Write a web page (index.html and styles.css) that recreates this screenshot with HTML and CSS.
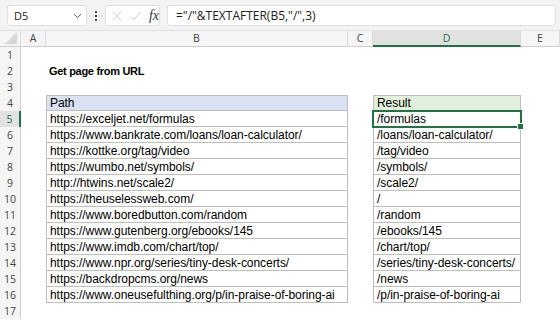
FILE: index.html
```html
<!DOCTYPE html>
<html>
<head>
<meta charset="utf-8">
<link rel="stylesheet" href="styles.css">
</head>
<body>
<div class="app">
  <div class="fbar">
    <div class="namebox"><span class="ref">D5</span>
      <svg class="chev" width="9" height="6" viewBox="0 0 9 6"><path d="M1 1.2 L4.5 4.6 L8 1.2" fill="none" stroke="#555" stroke-width="1"/></svg>
    </div>
    <div class="dots"><i></i><i></i><i></i></div>
    <div class="fxbox">
      <svg width="12" height="12" viewBox="0 0 12 12"><path d="M1 1 L11 11 M11 1 L1 11" stroke="#c4c4c4" stroke-width="1" fill="none"/></svg>
      <svg width="13" height="12" viewBox="0 0 13 12"><path d="M1 6.5 L4.5 10 L12 1.5" stroke="#c4c4c4" stroke-width="1" fill="none"/></svg>
      <span class="fx">fx</span>
    </div>
    <div class="formula">="/"&amp;TEXTAFTER(B5,"/",3)</div>
  </div>
  <div class="sheet">
    <div class="corner"><svg width="12" height="12" viewBox="0 0 12 12"><path d="M12 0 L12 12 L0 12 Z" fill="#d6d6d6"/></svg></div>
    <div class="ch">A</div><div class="ch">B</div><div class="ch">C</div><div class="ch sel">D</div><div class="ch">E</div>

    <div class="rh">1</div><div class="c"></div><div class="c"></div><div class="c"></div><div class="c"></div><div class="c"></div>
    <div class="rh">2</div><div class="c"></div><div class="c title">Get page from URL</div><div class="c"></div><div class="c"></div><div class="c"></div>
    <div class="rh">3</div><div class="c"></div><div class="c"></div><div class="c"></div><div class="c"></div><div class="c"></div>
    <div class="rh">4</div><div class="c"></div><div class="c t hb top">Path</div><div class="c"></div><div class="c t hg top">Result</div><div class="c"></div>
    <div class="rh rsel">5</div><div class="c"></div><div class="c t">https://exceljet.net/formulas</div><div class="c"></div><div class="c t active">/formulas<span class="handle"></span></div><div class="c"></div>
    <div class="rh">6</div><div class="c"></div><div class="c t">https://www.bankrate.com/loans/loan-calculator/</div><div class="c"></div><div class="c t">/loans/loan-calculator/</div><div class="c"></div>
    <div class="rh">7</div><div class="c"></div><div class="c t">https://kottke.org/tag/video</div><div class="c"></div><div class="c t">/tag/video</div><div class="c"></div>
    <div class="rh">8</div><div class="c"></div><div class="c t">https://wumbo.net/symbols/</div><div class="c"></div><div class="c t">/symbols/</div><div class="c"></div>
    <div class="rh">9</div><div class="c"></div><div class="c t">http://htwins.net/scale2/</div><div class="c"></div><div class="c t">/scale2/</div><div class="c"></div>
    <div class="rh">10</div><div class="c"></div><div class="c t">https://theuselessweb.com/</div><div class="c"></div><div class="c t">/</div><div class="c"></div>
    <div class="rh">11</div><div class="c"></div><div class="c t">https://www.boredbutton.com/random</div><div class="c"></div><div class="c t">/random</div><div class="c"></div>
    <div class="rh">12</div><div class="c"></div><div class="c t">https://www.gutenberg.org/ebooks/145</div><div class="c"></div><div class="c t">/ebooks/145</div><div class="c"></div>
    <div class="rh">13</div><div class="c"></div><div class="c t">https://www.imdb.com/chart/top/</div><div class="c"></div><div class="c t">/chart/top/</div><div class="c"></div>
    <div class="rh">14</div><div class="c"></div><div class="c t">https://www.npr.org/series/tiny-desk-concerts/</div><div class="c"></div><div class="c t">/series/tiny-desk-concerts/</div><div class="c"></div>
    <div class="rh">15</div><div class="c"></div><div class="c t">https://backdropcms.org/news</div><div class="c"></div><div class="c t">/news</div><div class="c"></div>
    <div class="rh">16</div><div class="c"></div><div class="c t">https://www.oneusefulthing.org/p/in-praise-of-boring-ai</div><div class="c"></div><div class="c t">/p/in-praise-of-boring-ai</div><div class="c"></div>
    <div class="rh">17</div><div class="c"></div><div class="c"></div><div class="c"></div><div class="c"></div><div class="c"></div>
  </div>
</div>
</body>
</html>
```
FILE: styles.css
```css
html, body { margin: 0; padding: 0; }
body { width: 560px; height: 320px; overflow: hidden; background: #fff; font-family: "Liberation Sans", Arial, sans-serif; }
.app { width: 560px; height: 320px; overflow: hidden; }
.fbar { height: 31px; background: #f3f3f3; display: flex; align-items: flex-start; padding: 5px 0 0 7px; box-sizing: border-box; border-bottom: 1px solid #e2e2e2; }
.namebox { width: 80px; height: 21px; box-sizing: border-box; background: #fff; border: 1px solid #e1e1e1; border-radius: 3px; display: flex; align-items: center; justify-content: space-between; padding: 0 4px 0 6px; font-family: "Open Sans", sans-serif; font-size: 11px; color: #222; }
.chev { margin-top: 1px; }
.dots { width: 18px; height: 21px; display: flex; flex-direction: column; align-items: center; justify-content: center; gap: 2px; }
.dots i { width: 2px; height: 2px; background: #444; display: block; }
.fxbox { width: 55px; height: 21px; box-sizing: border-box; background: #fff; border: 1px solid #e1e1e1; border-radius: 3px; display: flex; align-items: center; gap: 7px; padding: 0 0 0 6px; }
.fx { font-family: "Liberation Serif", serif; font-style: italic; font-size: 14px; color: #333; margin-left: 1px; }
.formula { margin-left: 7px; width: 389px; height: 21px; box-sizing: border-box; background: #fff; border: 1px solid #e1e1e1; border-radius: 3px; font-family: "Open Sans", sans-serif; font-size: 12px; line-height: 17px; color: #222; padding: 1px 0 0 8px; white-space: nowrap; }
.sheet { display: grid; grid-template-columns: 21px 25px 302px 25px 148px 39px; grid-template-rows: 16px; grid-auto-rows: 16px; }
.corner { background: #f5f5f5; border-right: 1px solid #dadada; border-bottom: 1px solid #cfcfcf; box-sizing: border-box; display: flex; align-items: flex-end; justify-content: flex-end; padding: 0 3px 2px 0; }
.ch { background: #f5f5f5; border-right: 1px solid #dadada; border-bottom: 1px solid #cfcfcf; box-sizing: border-box; text-align: center; font-family: "Open Sans", sans-serif; font-size: 10.5px; line-height: 15px; color: #444; }
.ch.sel { background: #e1e1e1; border-bottom: 2px solid #217346; color: #217346; }
.rh { background: #f5f5f5; border-right: 1px solid #cfcfcf; box-sizing: border-box; text-align: center; font-family: "Open Sans", sans-serif; font-size: 10.5px; line-height: 16px; color: #444; }
.rh.rsel { background: #e1e1e1; border-right: 2px solid #217346; color: #217346; }
.c { position: relative; box-sizing: border-box; font-size: 12px; line-height: 16px; white-space: nowrap; color: #000; }
.title { font-weight: bold; padding-left: 3px; font-size: 11px; letter-spacing: -0.3px; }
.t { border-left: 1px solid #bfbfbf; border-right: 1px solid #bfbfbf; border-bottom: 1px solid #bfbfbf; padding-left: 3px; line-height: 15px; padding-top: 1px; letter-spacing: -0.05px; }
.top { border-top: 1px solid #bfbfbf; padding-top: 0; }
.hb { background: #d9e1f2; }
.hg { background: #e2efda; }
.active { outline: 2px solid #217346; outline-offset: -1px; z-index: 2; }
.handle { position: absolute; right: -4px; bottom: -4px; width: 5px; height: 5px; background: #217346; border: 1px solid #fff; }
```
